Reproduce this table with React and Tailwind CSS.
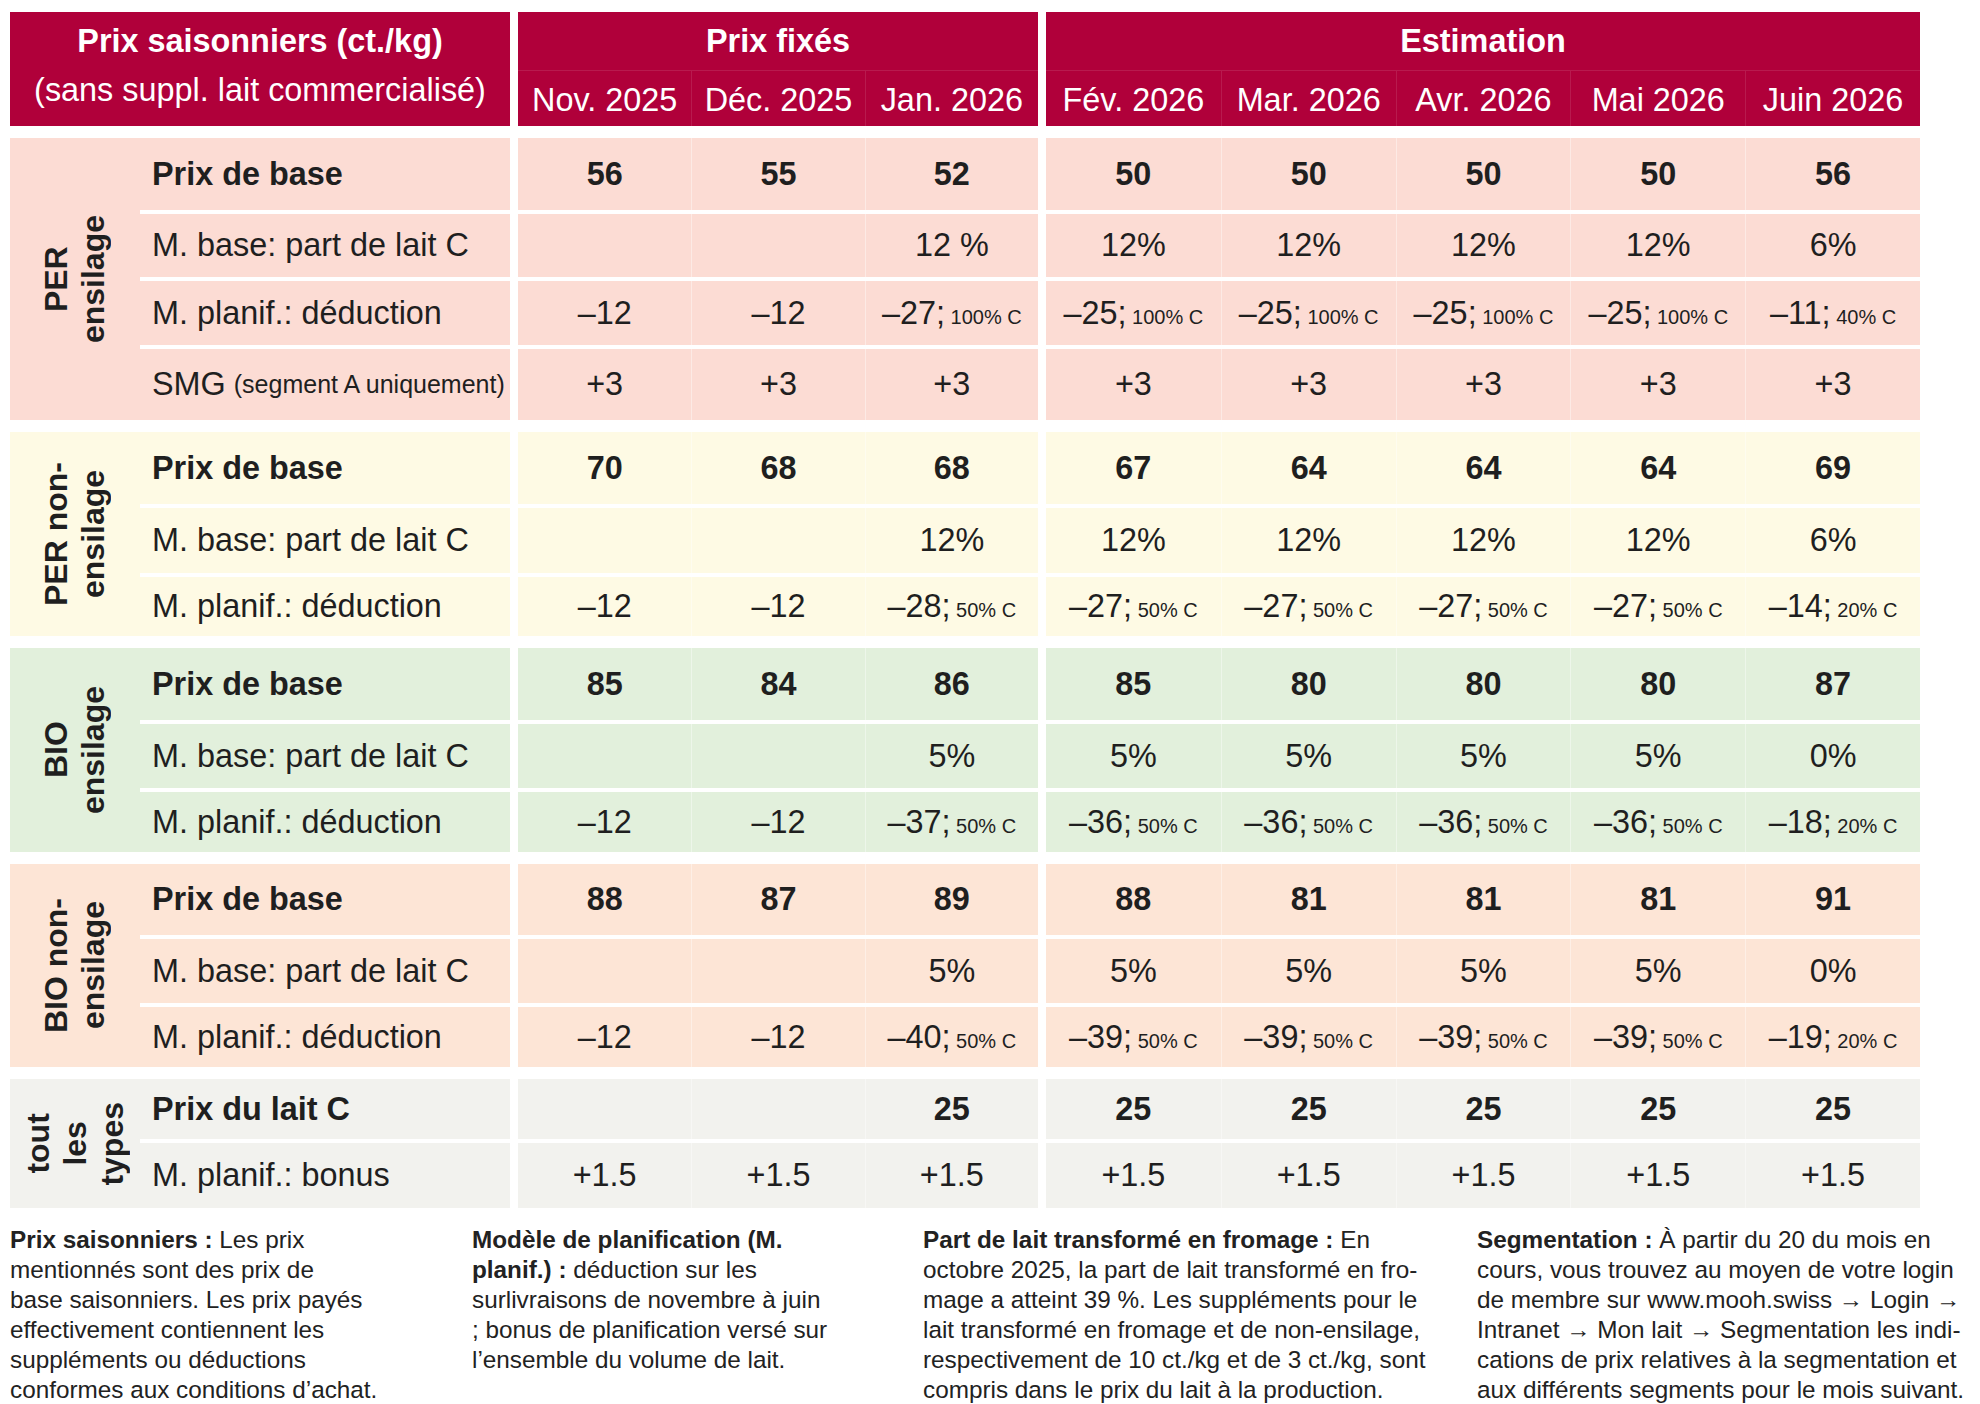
const GRID =
  "grid grid-cols-[130px_370px_8px_repeat(3,173.333px)_8px_repeat(5,174.8px)]";

const months = ["Nov. 2025", "Déc. 2025", "Jan. 2026", "Fév. 2026", "Mar. 2026", "Avr. 2026", "Mai 2026", "Juin 2026"];

const groups = [
  {
    label: ["PER", "ensilage"],
    bg: "bg-[#fcdcd4]",
    rows: [
      { h: "h-[72px]", bold: true, label: "Prix de base", cells: ["56", "55", "52", "50", "50", "50", "50", "56"] },
      { h: "h-[63px]", label: "M. base: part de lait C", cells: ["", "", "12 %", "12%", "12%", "12%", "12%", "6%"] },
      { h: "h-[64px]", label: "M. planif.: déduction", cells: ["–12", "–12", "–27;|100% C", "–25;|100% C", "–25;|100% C", "–25;|100% C", "–25;|100% C", "–11;|40% C"] },
      { h: "h-[71px]", label: "SMG", small: "(segment A uniquement)", cells: ["+3", "+3", "+3", "+3", "+3", "+3", "+3", "+3"] },
    ],
  },
  {
    label: ["PER non-", "ensilage"],
    bg: "bg-[#fefae4]",
    rows: [
      { h: "h-[72px]", bold: true, label: "Prix de base", cells: ["70", "68", "68", "67", "64", "64", "64", "69"] },
      { h: "h-[65px]", label: "M. base: part de lait C", cells: ["", "", "12%", "12%", "12%", "12%", "12%", "6%"] },
      { h: "h-[59px]", label: "M. planif.: déduction", cells: ["–12", "–12", "–28;|50% C", "–27;|50% C", "–27;|50% C", "–27;|50% C", "–27;|50% C", "–14;|20% C"] },
    ],
  },
  {
    label: ["BIO", "ensilage"],
    bg: "bg-[#e2f0dc]",
    rows: [
      { h: "h-[72px]", bold: true, label: "Prix de base", cells: ["85", "84", "86", "85", "80", "80", "80", "87"] },
      { h: "h-[64px]", label: "M. base: part de lait C", cells: ["", "", "5%", "5%", "5%", "5%", "5%", "0%"] },
      { h: "h-[60px]", label: "M. planif.: déduction", cells: ["–12", "–12", "–37;|50% C", "–36;|50% C", "–36;|50% C", "–36;|50% C", "–36;|50% C", "–18;|20% C"] },
    ],
  },
  {
    label: ["BIO non-", "ensilage"],
    bg: "bg-[#fde5d6]",
    rows: [
      { h: "h-[71px]", bold: true, label: "Prix de base", cells: ["88", "87", "89", "88", "81", "81", "81", "91"] },
      { h: "h-[64px]", label: "M. base: part de lait C", cells: ["", "", "5%", "5%", "5%", "5%", "5%", "0%"] },
      { h: "h-[60px]", label: "M. planif.: déduction", cells: ["–12", "–12", "–40;|50% C", "–39;|50% C", "–39;|50% C", "–39;|50% C", "–39;|50% C", "–19;|20% C"] },
    ],
  },
  {
    label: ["tout", "les", "types"],
    bg: "bg-[#f2f2ee]",
    rows: [
      { h: "h-[60px]", bold: true, label: "Prix du lait C", cells: ["", "", "25", "25", "25", "25", "25", "25"] },
      { h: "h-[65px]", label: "M. planif.: bonus", cells: ["+1.5", "+1.5", "+1.5", "+1.5", "+1.5", "+1.5", "+1.5", "+1.5"] },
    ],
  },
];

function Value({ text }) {
  const [main, small] = text.split("|");
  return (
    <span className="whitespace-nowrap">
      {main}
      {small && <span className="text-[20px]"> {small}</span>}
    </span>
  );
}

function Header() {
  const cell = "bg-[#b0003a] text-white";
  return (
    <div className={`${GRID} grid-rows-[58px_56px]`}>
      <div className={`${cell} col-span-2 row-span-2 flex flex-col items-center`}>
        <div className="flex h-[58px] items-center font-bold">Prix saisonniers (ct./kg)</div>
        <div className="leading-[40px]">(sans suppl. lait commercialisé)</div>
      </div>
      <div className="row-span-2" />
      <div className={`${cell} col-span-3 flex items-center justify-center font-bold`}>Prix fixés</div>
      <div className="row-span-2" />
      <div className={`${cell} col-span-5 flex items-center justify-center font-bold`}>Estimation</div>
      {months.map((m, i) => (
        <div
          key={m}
          className={`${cell} flex items-center justify-center border-t border-white/10 pt-1 whitespace-nowrap ${
            i === 0 || i === 3 ? "" : "border-l"
          }`}
        >
          {m}
        </div>
      ))}
    </div>
  );
}

function Group({ group }) {
  return (
    <div className={`${GRID} mt-3 gap-y-1`}>
      <div
        className={`${group.bg} flex items-center justify-center`}
        style={{ gridRow: `span ${group.rows.length}` }}
      >
        <div className="rotate-180 text-center text-[32px] leading-[37px] font-bold [writing-mode:vertical-rl]">
          {group.label.map((l) => (
            <div key={l}>{l}</div>
          ))}
        </div>
      </div>
      {group.rows.map((row, r) => (
        <div key={r} className="contents">
          <div className={`${group.bg} ${row.h} flex items-center pl-3 whitespace-nowrap ${row.bold ? "font-bold" : ""}`}>
            {row.label}
            {row.small && <span className="ml-2 text-[25px]">{row.small}</span>}
          </div>
          <div />
          {row.cells.slice(0, 3).map((c, i) => (
            <div
              key={i}
              className={`${group.bg} flex items-center justify-center ${row.bold ? "font-bold" : ""} ${
                i ? "border-l border-white/40" : ""
              }`}
            >
              <Value text={c} />
            </div>
          ))}
          <div />
          {row.cells.slice(3).map((c, i) => (
            <div
              key={i}
              className={`${group.bg} flex items-center justify-center ${row.bold ? "font-bold" : ""} ${
                i ? "border-l border-white/40" : ""
              }`}
            >
              <Value text={c} />
            </div>
          ))}
        </div>
      ))}
    </div>
  );
}

const notes = [
  [
    [<b key="b">Prix saisonniers :</b>, " Les prix"],
    ["mentionnés sont des prix de"],
    ["base saisonniers. Les prix payés"],
    ["effectivement contiennent les"],
    ["suppléments ou déductions"],
    ["conformes aux conditions d’achat."],
  ],
  [
    [<b key="b">Modèle de planification (M.</b>],
    [<b key="b">planif.) :</b>, " déduction sur les"],
    ["surlivraisons de novembre à juin"],
    ["; bonus de planification versé sur"],
    ["l’ensemble du volume de lait."],
  ],
  [
    [<b key="b">Part de lait transformé en fromage :</b>, " En"],
    ["octobre 2025, la part de lait transformé en fro-"],
    ["mage a atteint 39 %. Les suppléments pour le"],
    ["lait transformé en fromage et de non-ensilage,"],
    ["respectivement de 10 ct./kg et de 3 ct./kg, sont"],
    ["compris dans le prix du lait à la production."],
  ],
  [
    [<b key="b">Segmentation :</b>, " À partir du 20 du mois en"],
    ["cours, vous trouvez au moyen de votre login"],
    ["de membre sur www.mooh.swiss → Login →"],
    ["Intranet → Mon lait → Segmentation les indi-"],
    ["cations de prix relatives à la segmentation et"],
    ["aux différents segments pour le mois suivant."],
  ],
];

export default function App() {
  return (
    <div className="h-[1404px] w-[1980px] overflow-hidden bg-white pt-3 pl-[10px] font-['Liberation_Sans',Arial,sans-serif] text-[32.4px] leading-tight text-[#1f1f1f]">
      <Header />
      {groups.map((g) => (
        <Group key={g.label.join(" ")} group={g} />
      ))}
      <div className="mt-[17px] grid grid-cols-[462px_451px_554px_503px] text-[24.3px] leading-[30px] text-[#222]">
        {notes.map((lines, i) => (
          <div key={i}>
            {lines.map((parts, j) => (
              <div key={j} className="whitespace-nowrap">
                {parts}
              </div>
            ))}
          </div>
        ))}
      </div>
    </div>
  );
}
